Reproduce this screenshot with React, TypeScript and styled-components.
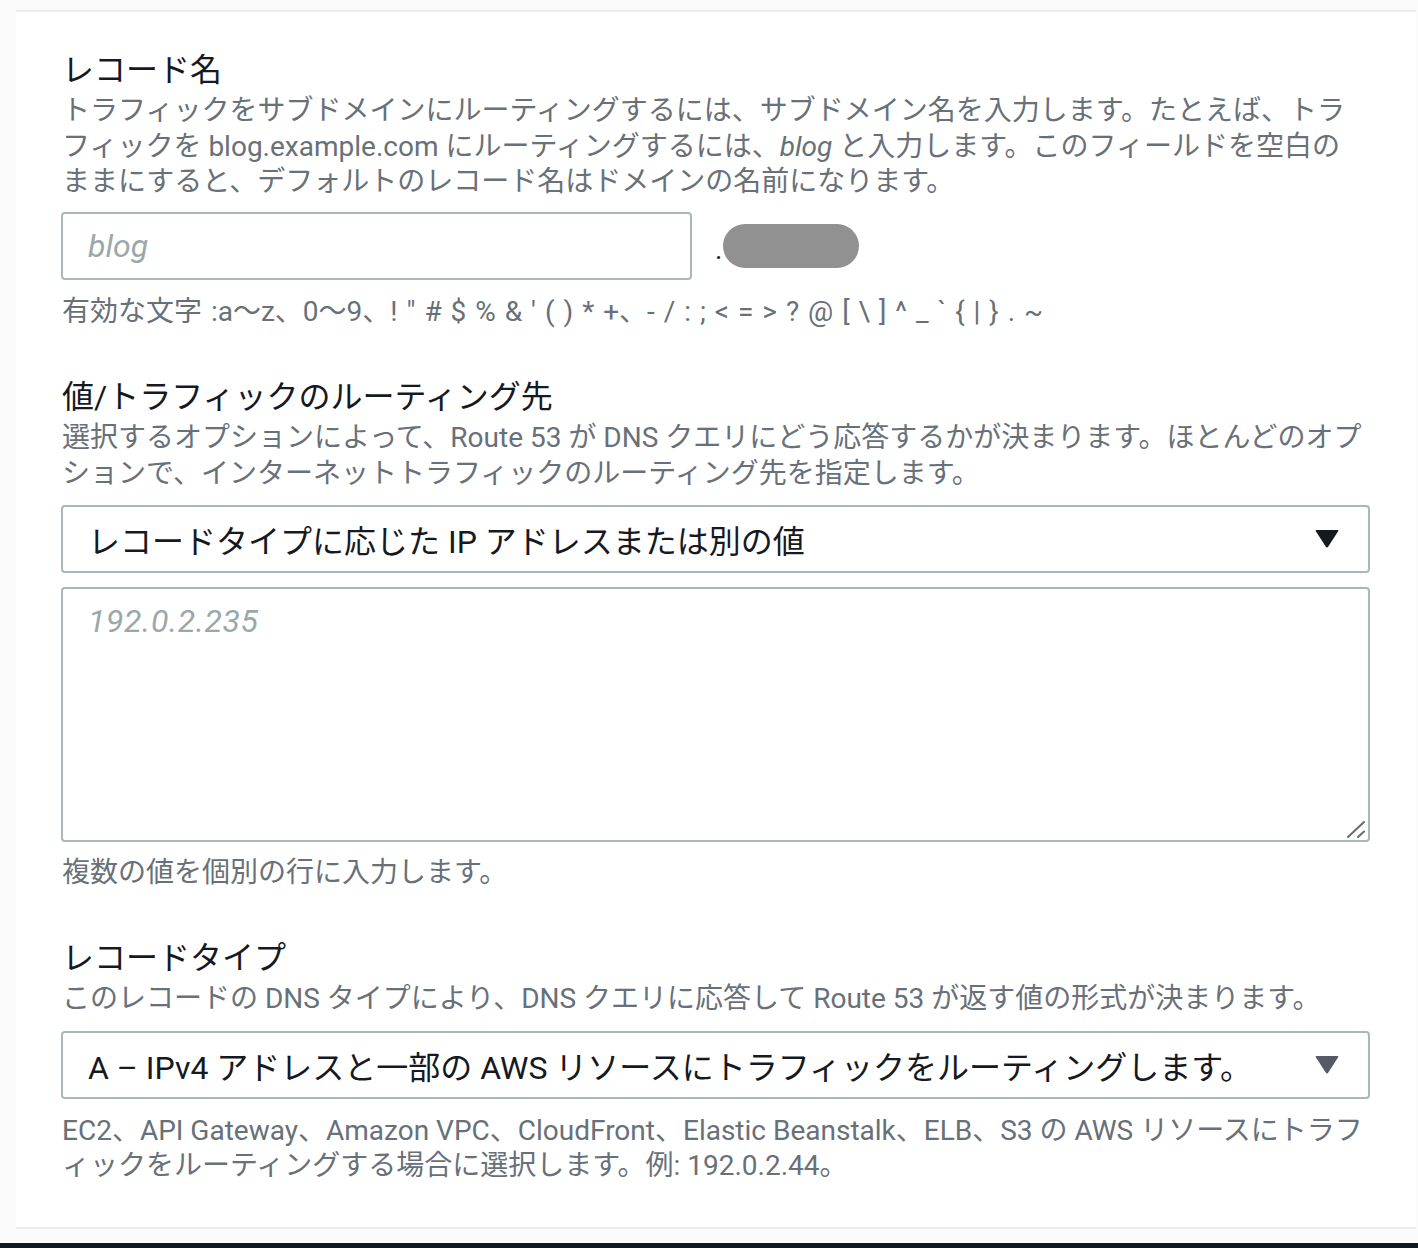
import React from "react";
import styled, { createGlobalStyle } from "styled-components";

const GlobalStyle = createGlobalStyle`
    body {
        margin: 0;
        background: #fafafa;
        font-family: Roboto, "Noto Sans CJK JP", sans-serif;
    }
`;

const Page = styled.div`
    min-height: 1248px;
    box-sizing: border-box;
    padding-top: 10px;
    display: flex;
    flex-direction: column;
`;

const Card = styled.section`
    margin-left: 16px;
    width: 1400px;
    box-sizing: border-box;
    background: #ffffff;
    border-top: 2px solid #eaeded;
    border-bottom: 2px solid #eaeded;
    padding: 36px 46px 43.5px 45px;
    display: flex;
    flex-direction: column;
    gap: 46px;
`;

const Footer = styled.div`
    margin-top: auto;
    height: 5px;
    background: #0f1720;
`;

const Field = styled.div`
    display: flex;
    flex-direction: column;
`;

const Label = styled.div`
    font-size: 32px;
    line-height: 44px;
    color: #16191f;
    padding-left: 1px;
`;

const Description = styled.div`
    margin-top: 1px;
    font-size: 28px;
    line-height: 35.5px;
    color: #687078;
    padding-left: 1px;

    span {
        display: block;
        white-space: nowrap;
    }
    em {
        font-style: italic;
    }
`;

const Hint = styled(Description)<{ $gap: number; $spaced?: boolean }>`
    margin-top: ${({ $gap }) => $gap}px;
    word-spacing: ${({ $spaced }) => ($spaced ? "2px" : "normal")};
`;

const InputRow = styled.div`
    margin-top: 12.5px;
    display: flex;
    align-items: center;
`;

const TextInput = styled.input`
    width: 631px;
    height: 68px;
    box-sizing: border-box;
    border: 2px solid #aab7b8;
    border-radius: 4px;
    padding: 0 25px;
    font-family: Roboto, "Noto Sans CJK JP", sans-serif;
    font-size: 32px;
    color: #16191f;
    outline: none;
    &::placeholder {
        color: #9ba8a9;
        font-style: italic;
    }
`;

const Dot = styled.span`
    margin-left: 23px;
    margin-top: 8px;
    font-size: 28px;
    line-height: 28px;
    color: #16191f;
`;

const MaskedDomain = styled.span`
    margin-left: 1px;
    width: 136px;
    height: 44px;
    border-radius: 22px;
    background: #919191;
`;

const SelectBox = styled.div<{ $gap: number }>`
    margin-top: ${({ $gap }) => $gap}px;
    height: 68px;
    box-sizing: border-box;
    border: 2px solid #aab7b8;
    border-radius: 4px;
    padding: 0 29px 0 25px;
    display: flex;
    align-items: center;
    justify-content: space-between;
    font-size: 32px;
    color: #16191f;
    cursor: pointer;
    white-space: nowrap;
`;

const Caret = styled.svg<{ $tone: string }>`
    flex: none;
    width: 24px;
    height: 18px;
    fill: ${({ $tone }) => $tone};
`;

const AreaWrap = styled.div`
    position: relative;
    margin-top: 14px;
`;

const TextArea = styled.textarea`
    display: block;
    width: 100%;
    height: 255px;
    box-sizing: border-box;
    border: 2px solid #aab7b8;
    border-radius: 4px;
    padding: 12px 25px;
    resize: none;
    outline: none;
    font-family: Roboto, "Noto Sans CJK JP", sans-serif;
    font-size: 32px;
    line-height: 40px;
    letter-spacing: 0.6px;
    color: #16191f;
    &::placeholder {
        color: #9ba8a9;
        font-style: italic;
    }
`;

const ResizeGrip = styled.svg`
    position: absolute;
    right: 4px;
    bottom: 4px;
    width: 20px;
    height: 18px;
    pointer-events: none;
`;

const SelectField = ({ value, tone, gap }: { value: string; tone: string; gap: number }) => (
    <SelectBox $gap={gap} role="button">
        <span>{value}</span>
        <Caret $tone={tone} viewBox="0 0 24 18">
            <path d="M1.5 0 H22.5 Q24 0 23 1.6 L13.3 16.6 Q12 18.4 10.7 16.6 L1 1.6 Q0 0 1.5 0 Z" />
        </Caret>
    </SelectBox>
);

const validChars =
    '有効な文字 :a〜z、0〜9、! " # $ % & \' ( ) * +、- / : ; < = > ? @ [ \\ ] ^ _ ` { | } . ~';

export default function App() {
    return (
        <>
            <GlobalStyle />
            <Page>
                <Card>
                    <Field>
                        <Label>レコード名</Label>
                        <Description>
                            <span>トラフィックをサブドメインにルーティングするには、サブドメイン名を入力します。たとえば、トラ</span>
                            <span>
                                フィックを blog.example.com にルーティングするには、<em>blog</em> と入力します。このフィールドを空白の
                            </span>
                            <span>ままにすると、デフォルトのレコード名はドメインの名前になります。</span>
                        </Description>
                        <InputRow>
                            <TextInput placeholder="blog" />
                            <Dot>.</Dot>
                            <MaskedDomain />
                        </InputRow>
                        <Hint $gap={13.5} $spaced>
                            <span>{validChars}</span>
                        </Hint>
                    </Field>

                    <Field>
                        <Label>値/トラフィックのルーティング先</Label>
                        <Description>
                            <span>選択するオプションによって、Route 53 が DNS クエリにどう応答するかが決まります。ほとんどのオプ</span>
                            <span>ションで、インターネットトラフィックのルーティング先を指定します。</span>
                        </Description>
                        <SelectField
                            gap={14}
                            tone="#16191f"
                            value="レコードタイプに応じた IP アドレスまたは別の値"
                        />
                        <AreaWrap>
                            <TextArea placeholder="192.0.2.235" />
                            <ResizeGrip viewBox="0 0 20 18">
                                <path d="M2 17 L18 2 M12 17 L18 11.5" stroke="#6b6b6b" strokeWidth="2" strokeLinecap="round" />
                            </ResizeGrip>
                        </AreaWrap>
                        <Hint $gap={12.5}>
                            <span>複数の値を個別の行に入力します。</span>
                        </Hint>
                    </Field>

                    <Field>
                        <Label>レコードタイプ</Label>
                        <Description>
                            <span>このレコードの DNS タイプにより、DNS クエリに応答して Route 53 が返す値の形式が決まります。</span>
                        </Description>
                        <SelectField
                            gap={14.5}
                            tone="#545b64"
                            value="A – IPv4 アドレスと一部の AWS リソースにトラフィックをルーティングします。"
                        />
                        <Hint $gap={13.5}>
                            <span>EC2、API Gateway、Amazon VPC、CloudFront、Elastic Beanstalk、ELB、S3 の AWS リソースにトラフ</span>
                            <span>ィックをルーティングする場合に選択します。例: 192.0.2.44。</span>
                        </Hint>
                    </Field>
                </Card>
                <Footer />
            </Page>
        </>
    );
}
